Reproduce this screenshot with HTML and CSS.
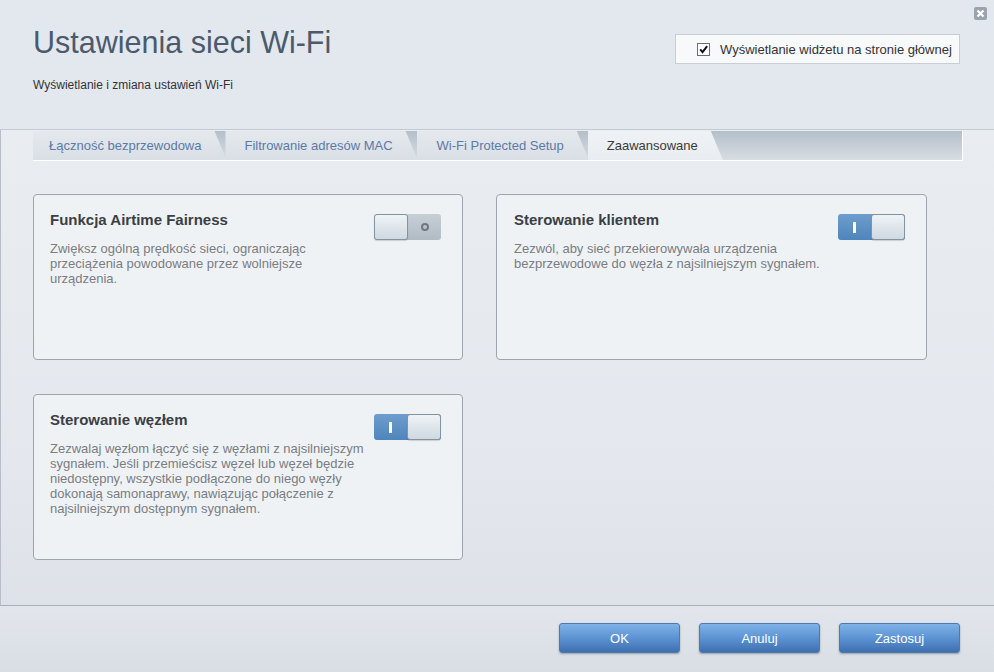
FILE: index.html
```html
<!DOCTYPE html>
<html lang="pl">

<head>
    <meta charset="UTF-8">
    <meta name="viewport" content="width=device-width, initial-scale=1.0">
    <title>Ustawienia sieci Wi-Fi</title>
    <link rel="stylesheet" href="styles.css">
</head>

<body>
    <div class="dialog">
        <!-- zamknij -->
        <span class="close">
            <svg width="13" height="13" viewBox="0 0 13 13">
                <rect x="0" y="0" width="13" height="13" rx="2" fill="#9ba3ac" />
                <path d="M3.5 3.5 L9.5 9.5 M9.5 3.5 L3.5 9.5" stroke="#fff" stroke-width="2.2" />
            </svg>
        </span>

        <!-- nagłówek -->
        <div class="header">
            <div class="head-text">
                <h1>Ustawienia sieci Wi-Fi</h1>
                <p>Wyświetlanie i zmiana ustawień Wi-Fi</p>
            </div>
            <label class="widget-opt">
                <span class="check">
                    <svg width="13" height="13" viewBox="0 0 13 13">
                        <path d="M2.6 6.4 L5.4 9.6 L10.8 2.6" fill="none" stroke="#111" stroke-width="2.3" />
                    </svg>
                </span>
                Wyświetlanie widżetu na stronie głównej
            </label>
        </div>

        <div class="content">
            <!-- zakładki -->
            <div class="tabs">
                <div class="tab">Łączność bezprzewodowa</div>
                <div class="tab">Filtrowanie adresów MAC</div>
                <div class="tab">Wi-Fi Protected Setup</div>
                <div class="tab active">Zaawansowane</div>
            </div>

            <div class="cards">
                <div class="card">
                    <div class="card-text">
                        <h3>Funkcja Airtime Fairness</h3>
                        <p>Zwiększ ogólną prędkość sieci, ograniczając przeciążenia powodowane przez wolniejsze urządzenia.</p>
                    </div>
                    <div class="toggle off">
                        <span class="knob"></span>
                        <span class="mark"><i class="ring"></i></span>
                    </div>
                </div>

                <div class="card wide">
                    <div class="card-text">
                        <h3>Sterowanie klientem</h3>
                        <p>Zezwól, aby sieć przekierowywała urządzenia bezprzewodowe do węzła z najsilniejszym sygnałem.</p>
                    </div>
                    <div class="toggle on">
                        <span class="mark"><i class="bar"></i></span>
                        <span class="knob"></span>
                    </div>
                </div>

                <div class="card">
                    <div class="card-text">
                        <h3>Sterowanie węzłem</h3>
                        <p>Zezwalaj węzłom łączyć się z węzłami z najsilniejszym sygnałem. Jeśli przemieścisz węzeł lub węzeł będzie niedostępny, wszystkie podłączone do niego węzły dokonają samonaprawy, nawiązując połączenie z najsilniejszym dostępnym sygnałem.</p>
                    </div>
                    <div class="toggle on">
                        <span class="mark"><i class="bar"></i></span>
                        <span class="knob"></span>
                    </div>
                </div>
            </div>
        </div>

        <!-- przyciski -->
        <div class="footer">
            <button class="btn">OK</button>
            <button class="btn">Anuluj</button>
            <button class="btn">Zastosuj</button>
        </div>
    </div>
</body>

</html>
```

FILE: styles.css
```css
html,
body {
    margin: 0;
    padding: 0;
}

body {
    font-family: "Liberation Sans", Arial, sans-serif;
    color: #333;
    width: 994px;
    height: 672px;
    overflow: hidden;
}

.dialog {
    height: 672px;
    display: flex;
    flex-direction: column;
    position: relative;
    background: #e6eaf0;
}

.close {
    position: absolute;
    top: 7px;
    right: 7px;
    width: 13px;
    height: 13px;
}

.close svg {
    display: block;
}

/* nagłówek */
.header {
    height: 130px;
    flex: none;
    box-sizing: border-box;
    border-bottom: 1px solid #c4cad1;
    background: #e3e8ef;
    display: flex;
    justify-content: space-between;
    align-items: flex-start;
    padding: 0 34px 0 33px;
}

.head-text h1 {
    margin: 24px 0 0;
    font-size: 30.5px;
    line-height: 36px;
    font-weight: normal;
    color: #4b5a6d;
}

.head-text p {
    margin: 18px 0 0;
    font-size: 12px;
    line-height: 14px;
    color: #333;
}

.widget-opt {
    margin-top: 34px;
    width: 285px;
    height: 30px;
    box-sizing: border-box;
    border: 1px solid #c9ced4;
    background: #f7f9fb;
    display: flex;
    align-items: center;
    gap: 10px;
    padding-left: 21px;
    font-size: 13px;
    color: #333;
}

.check {
    width: 13px;
    height: 13px;
    box-sizing: border-box;
    border: 1px solid #6b6f74;
    background: #fff;
    display: flex;
    align-items: center;
    justify-content: center;
}

.check svg {
    display: block;
    width: 11px;
    height: 11px;
}

/* treść */
.content {
    flex: 1;
    border-left: 1px solid #b7bec7;
    border-bottom: 1px solid #a8b0b9;
    background: linear-gradient(#e9edf1, #e4e8ee 70%, #dde2e8);
}

.tabs {
    margin: 1px 31px 0 32px;
    height: 29px;
    border-right: 1px solid #fff;
    border-bottom: 1px solid #fff;
    background: linear-gradient(#b5bfc9, #d7dde3);
    display: flex;
}

.tab {
    height: 29px;
    line-height: 29px;
    padding: 0 25px 0 16px;
    margin-right: -1px;
    font-size: 13px;
    color: #5b7aa9;
    background: linear-gradient(#e5e9ee, #d9dfe5);
    clip-path: polygon(0 0, calc(100% - 12px) 0, 100% 100%, 0 100%);
    position: relative;
}

.tab:nth-child(1) {
    z-index: 4;
}

.tab:nth-child(2) {
    z-index: 3;
    padding-left: 19px;
}

.tab:nth-child(3) {
    z-index: 2;
    padding-left: 20px;
}

.tab.active {
    z-index: 1;
    color: #3a3a3a;
    padding-left: 19px;
    background: linear-gradient(#eff2f5, #e9edf1);
}

.cards {
    display: grid;
    grid-template-columns: 430px 431px;
    gap: 34px 33px;
    padding: 33px 0 0 32px;
}

.card {
    height: 166px;
    box-sizing: border-box;
    border: 1px solid #9ea5ad;
    border-radius: 4px;
    background: #eff2f5;
    padding: 16px 21px 0 16px;
    display: flex;
    align-items: flex-start;
}

.card.wide {
    padding-left: 17px;
}

.card-text {
    flex: 1;
    padding-right: 6px;
}

.card h3 {
    margin: 0;
    font-size: 15px;
    line-height: 18px;
    color: #3a3f46;
}

.card p {
    margin: 12px 0 0;
    font-size: 13px;
    line-height: 15px;
    color: #7a7d82;
}

/* przełącznik */
.toggle {
    flex: none;
    width: 67px;
    height: 26px;
    margin-top: 3px;
    border-radius: 3px;
    display: flex;
}

.toggle.off {
    background: linear-gradient(#c7cfd6, #b1bbc4);
}

.toggle.on {
    background: linear-gradient(#6d9dcc, #4f85bc);
}

.toggle .mark {
    flex: 1;
    display: flex;
    align-items: center;
    justify-content: center;
}

.knob {
    width: 34px;
    height: 26px;
    box-sizing: border-box;
    border: 1px solid #85929f;
    border-radius: 3px;
    background: linear-gradient(#eef3f6, #cfd9e1);
    box-shadow: 0 1px 1px rgba(0, 0, 0, .15);
}

.ring {
    width: 4px;
    height: 4px;
    border: 2px solid #6f7881;
    border-radius: 50%;
}

.bar {
    width: 3px;
    height: 11px;
    background: #fff;
}

/* stopka */
.footer {
    height: 66px;
    flex: none;
    box-sizing: border-box;
    background: linear-gradient(#e2e6ec, #d9dee5);
    display: flex;
    justify-content: flex-end;
    align-items: flex-start;
    gap: 19px;
    padding: 17px 34px 0 0;
}

.btn {
    width: 121px;
    height: 30px;
    border: 1px solid #4a79b3;
    border-radius: 3px;
    background: linear-gradient(#80b2e7, #5c93d3 50%, #3e70b1);
    box-shadow: 0 1px 2px rgba(0, 0, 0, .3);
    color: #fff;
    font-family: "Liberation Sans", Arial, sans-serif;
    font-size: 13px;
    padding: 0;
}
```
